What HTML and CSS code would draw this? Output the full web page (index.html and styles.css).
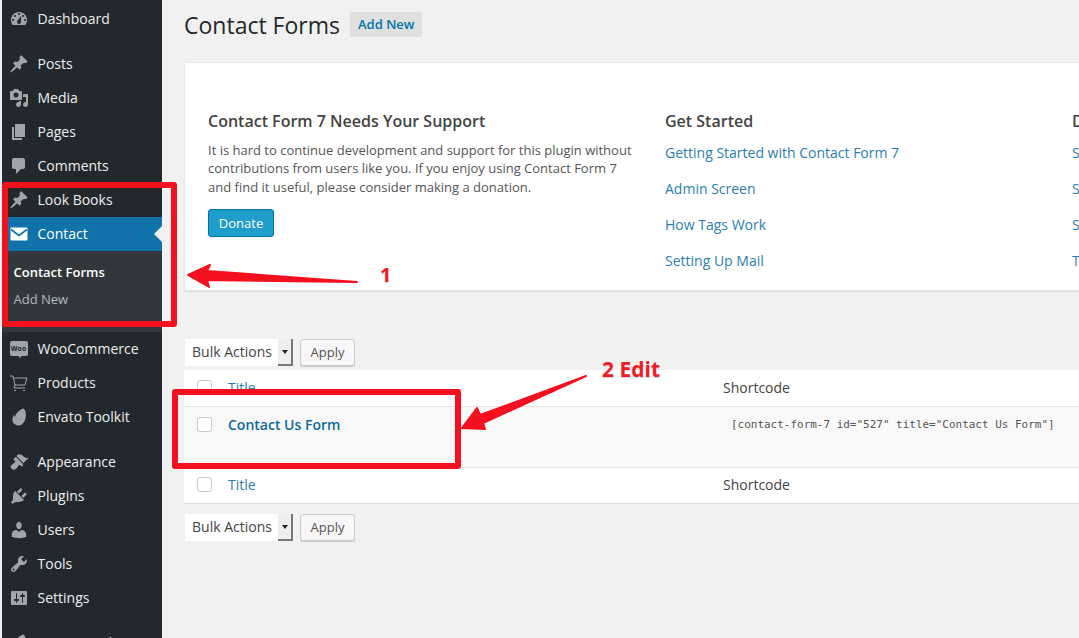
FILE: index.html
```html
<!DOCTYPE html>
<html lang="en">

<head>
    <meta charset="UTF-8">
    <title>Contact Forms</title>
    <link rel="stylesheet" href="styles.css">
</head>

<body>
    <svg class="defs" width="0" height="0">
        <symbol id="i-dashboard" viewBox="0 0 20 20"><path d="M3.76 16h12.48c1.1-1.37 1.76-3.11 1.76-5 0-4.42-3.58-8-8-8s-8 3.58-8 8c0 1.89.66 3.63 1.76 5zM10 4c.55 0 1 .45 1 1s-.45 1-1 1-1-.45-1-1 .45-1 1-1zM6 6c.55 0 1 .45 1 1s-.45 1-1 1-1-.45-1-1 .45-1 1-1zm8 0c.55 0 1 .45 1 1s-.45 1-1 1-1-.45-1-1 .45-1 1-1zm-5.37 5.55L12 7v6c0 1.1-.9 2-2 2s-2-.9-2-2c0-.57.24-1.08.63-1.45zM4 10c.55 0 1 .45 1 1s-.45 1-1 1-1-.45-1-1 .45-1 1-1zm12 0c.55 0 1 .45 1 1s-.45 1-1 1-1-.45-1-1 .45-1 1-1z" fill-rule="evenodd"/></symbol>
        <symbol id="i-pin" viewBox="0 0 20 20"><path d="M10.44 3.02l1.82-1.82 6.36 6.35-1.83 1.82c-1.05-.68-2.48-.57-3.41.36l-.75.75c-.92.93-1.04 2.35-.35 3.41l-1.83 1.82-2.41-2.41-2.8 2.79c-.42.42-3.38 2.71-3.8 2.29s1.86-3.39 2.28-3.81l2.79-2.79L4.1 9.36l1.83-1.82c1.05.69 2.48.57 3.4-.36l.75-.75c.93-.92 1.05-2.35.36-3.41z"/></symbol>
        <symbol id="i-media" viewBox="0 0 20 20"><path d="M13 11V4c0-.55-.45-1-1-1h-1.67L9 1H5L3.67 3H2c-.55 0-1 .45-1 1v7c0 .55.45 1 1 1h10c.55 0 1-.45 1-1zM7 4.5c1.38 0 2.5 1.12 2.5 2.5S8.38 9.5 7 9.5 4.5 8.38 4.5 7 5.62 4.5 7 4.5zM14 6h5v10.5c0 1.38-1.12 2.5-2.5 2.5S14 17.88 14 16.5s1.12-2.5 2.5-2.5c.17 0 .34.02.5.05V9h-3V6zm-4 8.05V13h2v3.5c0 1.38-1.12 2.5-2.5 2.5S7 17.88 7 16.5 8.12 14 9.5 14c.17 0 .34.02.5.05z"/></symbol>
        <symbol id="i-pages" viewBox="0 0 20 20"><path d="M6 15V2h10v13H6zm-1 1h8v2H3V5h2v11z"/></symbol>
        <symbol id="i-comments" viewBox="0 0 20 20"><path d="M5 2h9c1.1 0 2 .9 2 2v7c0 1.1-.9 2-2 2h-2l-5 5v-5H5c-1.1 0-2-.9-2-2V4c0-1.1.9-2 2-2z"/></symbol>
        <symbol id="i-mail" viewBox="0 0 20 20"><path d="M2.5 3.5h15c.6 0 1 .4 1 1v11c0 .6-.4 1-1 1h-15c-.6 0-1-.4-1-1v-11c0-.6.4-1 1-1z"/><path d="M2 5.500l8 6 8-6" fill="none" stroke="#0f72a8" stroke-width="1.6"/></symbol>
        <symbol id="i-cart" viewBox="0 0 20 20"><path d="M1 3h3l2 9h10l2-7H5M6 12l-1 3h11" fill="none" stroke="currentColor" stroke-width="1"/><path d="M5 17h2v1H5zM14 17h2v1h-2z"/></symbol>
        <symbol id="i-leaf" viewBox="0 0 20 20"><path d="M14.6 1.4c2 1.6 2.9 6.4 1.7 10.600-1.100 3.900-3.700 6.400-7.200 6.400-3.600 0-5.700-2.800-5.700-5.800 0-2 .8-3.600 1.700-4.900.2 1 .4 2 .9 2.700.5-3.800 3.700-7.700 8.600-9z"/></symbol>
        <symbol id="i-brush" viewBox="0 0 20 20"><path d="M14.48 11.06L7.41 3.99l1.5-1.5c.5-.56 2.3-.47 3.51.32 1.21.8 1.43 1.28 2.91 2.1 1.18.64 2.45 1.26 4.45.85zm-.71.71L6.7 4.7 4.93 6.47c-.39.39-.39 1.02 0 1.41l1.06 1.06c.39.39.39 1.03 0 1.42-.6.6-1.43 1.11-2.21 1.69-.35.26-.7.53-1.01.84C1.43 13.23.91 14.95 2.6 16.64c1.69 1.68 3.41 1.16 4.75-.18.31-.31.58-.66.85-1.02.57-.78 1.08-1.61 1.69-2.21.39-.39 1.02-.39 1.41 0l1.06 1.06c.39.39 1.02.39 1.41 0z"/></symbol>
        <symbol id="i-plugin" viewBox="0 0 20 20"><path d="M13.11 4.36L9.87 7.6 8 5.73l3.24-3.24c.35-.34 1.05-.2 1.56.32.52.51.66 1.21.31 1.55zm-8 1.77l.91-1.12 9.01 9.01-1.19.84c-.71.71-2.63 1.16-3.82 1.16H6.14L4.9 17.26c-.59.59-1.54.59-2.12 0-.59-.58-.59-1.53 0-2.12l1.24-1.24v-3.88c0-1.13.4-3.19 1.09-3.89zm7.26 3.97l3.24-3.24c.34-.35 1.04-.21 1.55.31.52.51.66 1.21.31 1.55l-3.24 3.25z"/></symbol>
        <symbol id="i-users" viewBox="0 0 20 20"><path d="M10 9.25c-2.27 0-2.73-3.44-2.73-3.44C7 4.02 7.82 2 9.97 2c2.16 0 2.98 2.02 2.71 3.81 0 0-.41 3.44-2.68 3.44zm0 2.57L12.72 10c2.39 0 4.52 2.33 4.52 4.53v2.49s-3.65 1.13-7.24 1.13c-3.65 0-7.24-1.13-7.24-1.13v-2.49c0-2.25 1.94-4.48 4.47-4.48z"/></symbol>
        <symbol id="i-tools" viewBox="0 0 20 20"><path d="M16.68 9.77c-1.34 1.34-3.3 1.67-4.95.99l-5.41 6.52c-.99.99-2.59.99-3.58 0s-.99-2.59 0-3.57l6.52-5.42c-.68-1.65-.35-3.61.99-4.95 1.28-1.28 3.12-1.62 4.72-1.06l-2.89 2.89 2.82 2.82 2.86-2.87c.53 1.58.18 3.39-1.08 4.65zM3.81 16.21c.4.39 1.04.39 1.43 0 .4-.4.4-1.04 0-1.43-.39-.4-1.03-.4-1.43 0-.39.39-.39 1.03 0 1.43z"/></symbol>
        <symbol id="i-settings" viewBox="0 0 20 20"><path d="M18 16V4c0-.55-.45-1-1-1H3c-.55 0-1 .45-1 1v12c0 .55.45 1 1 1h14c.55 0 1-.45 1-1zM8 11h1c.55 0 1 .45 1 1s-.45 1-1 1H8v1.5c0 .28-.22.5-.5.5s-.5-.22-.5-.5V13H6c-.55 0-1-.45-1-1s.45-1 1-1h1V5.5c0-.28.22-.5.5-.5s.5.22.5.5V11zm5-2h-1c-.55 0-1-.45-1-1s.45-1 1-1h1V5.5c0-.28.22-.5.5-.5s.5.22.5.5V7h1c.55 0 1 .45 1 1s-.45 1-1 1h-1v5.5c0 .28-.22.5-.5.5s-.5-.22-.5-.5V9z"/></symbol>
    </svg>

    <div id="khung">
        <nav class="menu">
            <ul>
                <li><a href=""><svg class="icon"><use href="#i-dashboard"/></svg>Dashboard</a></li>
                <li class="sep"></li>
                <li><a href=""><svg class="icon"><use href="#i-pin"/></svg>Posts</a></li>
                <li><a href=""><svg class="icon"><use href="#i-media"/></svg>Media</a></li>
                <li><a href=""><svg class="icon"><use href="#i-pages"/></svg>Pages</a></li>
                <li><a href=""><svg class="icon"><use href="#i-comments"/></svg>Comments</a></li>
                <li><a href=""><svg class="icon"><use href="#i-pin"/></svg>Look Books</a></li>
                <li class="current">
                    <a href=""><svg class="icon"><use href="#i-mail"/></svg>Contact</a>
                    <ul class="submenu">
                        <li><a href="" class="active">Contact Forms</a></li>
                        <li><a href="">Add New</a></li>
                    </ul>
                </li>
                <li>
                    <a href="">
                        <span class="woo">Woo</span>WooCommerce
                    </a>
                </li>
                <li><a href=""><svg class="icon"><use href="#i-cart"/></svg>Products</a></li>
                <li><a href=""><svg class="icon"><use href="#i-leaf"/></svg>Envato Toolkit</a></li>
                <li class="sep"></li>
                <li><a href=""><svg class="icon"><use href="#i-brush"/></svg>Appearance</a></li>
                <li><a href=""><svg class="icon"><use href="#i-plugin"/></svg>Plugins</a></li>
                <li><a href=""><svg class="icon"><use href="#i-users"/></svg>Users</a></li>
                <li><a href=""><svg class="icon"><use href="#i-tools"/></svg>Tools</a></li>
                <li><a href=""><svg class="icon"><use href="#i-settings"/></svg>Settings</a></li>
                <li class="sep"></li>
                <li><a href=""><svg class="icon"><use href="#i-leaf"/></svg>Loco Translate</a></li>
            </ul>
        </nav>

        <main class="noi-dung">
            <div class="tieu-de">
                <h1>Contact Forms</h1>
                <a href="" class="add-new">Add New</a>
            </div>

            <section class="welcome">
                <div class="cot cot-1">
                    <h3>Contact Form 7 Needs Your Support</h3>
                    <p>It is hard to continue development and support for this plugin without contributions from users like you. If you enjoy using Contact Form 7 and find it useful, please consider making a donation.</p>
                    <a href="" class="donate">Donate</a>
                </div>
                <div class="cot cot-2">
                    <h3>Get Started</h3>
                    <a href="">Getting Started with Contact Form 7</a>
                    <a href="">Admin Screen</a>
                    <a href="">How Tags Work</a>
                    <a href="">Setting Up Mail</a>
                </div>
                <div class="cot cot-3">
                    <h3>Did You Know?</h3>
                    <a href="">Spam Filtering</a>
                    <a href="">Save Messages</a>
                    <a href="">Special Tags</a>
                    <a href="">Translations</a>
                </div>
            </section>

            <div class="bulk bulk-tren">
                <div class="chon">Bulk Actions<span class="mui-ten"></span></div>
                <button class="apply">Apply</button>
            </div>

            <table class="ds-form">
                <tr class="head">
                    <td class="c-check"><span class="check"></span></td>
                    <td class="c-title"><a href="">Title</a></td>
                    <td>Shortcode</td>
                </tr>
                <tr class="form-row">
                    <td class="c-check"><span class="check"></span></td>
                    <td class="c-title"><a href="" class="ten-form">Contact Us Form</a></td>
                    <td><code>[contact-form-7 id="527" title="Contact Us Form"]</code></td>
                </tr>
                <tr class="foot">
                    <td class="c-check"><span class="check"></span></td>
                    <td class="c-title"><a href="">Title</a></td>
                    <td>Shortcode</td>
                </tr>
            </table>

            <div class="bulk">
                <div class="chon">Bulk Actions<span class="mui-ten"></span></div>
                <button class="apply">Apply</button>
            </div>
        </main>
    </div>

    <!-- annotations drawn on top of the screenshot -->
    <div class="box box-1"></div>
    <div class="box box-2"></div>
    <svg class="arrows" width="1079" height="638">
        <path d="M188 275L210 265 207 271 357 282 207 280 209 287z"/>
        <path d="M462 428L477 408 480 415 586 376 483 423 485 429z"/>
    </svg>
    <span class="note note-1">1</span>
    <span class="note note-2">2 Edit</span>
</body>

</html>
```

FILE: styles.css
```css
* {
    box-sizing: border-box;
    padding: 0;
    margin: 0;
}

html,
body {
    width: 1079px;
    height: 638px;
    overflow: hidden;
}

body {
    position: relative;
    background-color: #f1f1f1;
    color: #444;
    font-family: "Open Sans", sans-serif;
    font-size: 13px;
}

a {
    text-decoration: none;
    color: #0073aa;
}

.defs {
    position: absolute;
}

#khung {
    display: flex;
    height: 638px;
    padding-left: 1.5px;
}

/* sidebar */
.menu {
    flex: none;
    width: 160px;
    height: 638px;
    overflow: hidden;
    padding-top: 2px;
    background-color: #23282d;
}

.menu ul {
    list-style: none;
}

.menu > ul > li > a {
    display: flex;
    align-items: center;
    height: 34px;
    padding-left: 7px;
    padding-bottom: 1px;
    color: #eee;
    font-size: 14px;
}

.menu .sep {
    height: 11px;
}

.icon {
    flex: none;
    width: 20px;
    height: 20px;
    margin-right: 9px;
    fill: #a0a5aa;
    color: #a0a5aa;
}

.woo {
    position: relative;
    flex: none;
    width: 18px;
    height: 15px;
    margin-right: 10px;
    margin-left: 1px;
    border-radius: 2px;
    background-color: #a0a5aa;
    color: #23282d;
    font-size: 7px;
    font-weight: 700;
    line-height: 15px;
    text-align: center;
}

.woo::after {
    content: "";
    position: absolute;
    left: 9px;
    top: 15px;
    border-top: 2px solid #a0a5aa;
    border-right: 3px solid transparent;
}

.menu .current > a {
    position: relative;
    background-color: #0f72a8;
    color: #fff;
}

.menu .current > a .icon {
    fill: #fff;
}

.menu .current > a::after {
    content: "";
    position: absolute;
    right: 0;
    top: 9px;
    border: 8px solid transparent;
    border-right-color: #f1f1f1;
    border-left-width: 0;
}

.submenu {
    height: 81px;
    padding-top: 10px;
    background-color: #32373c;
}

.submenu a {
    display: block;
    height: 27px;
    padding-left: 12px;
    color: #b4b9be;
    font-size: 13px;
    line-height: 22px;
}

.submenu a.active {
    color: #fff;
    font-weight: 600;
}

/* content */
.noi-dung {
    flex: none;
    width: 1100px;
    padding-left: 22.5px;
}

.tieu-de {
    display: flex;
    align-items: center;
    height: 49px;
}

.tieu-de h1 {
    font-size: 23px;
    font-weight: 400;
    color: #23282d;
}

.add-new {
    margin-left: 10px;
    padding: 0 8px;
    height: 25px;
    background-color: #e0e0e0;
    font-size: 13px;
    font-weight: 600;
    line-height: 25px;
}

.welcome {
    display: flex;
    height: 229px;
    margin-top: 13px;
    padding: 47px 0 0 23px;
    background-color: #fff;
    box-shadow: 0 1px 1px rgba(0, 0, 0, .08);
    border: 1px solid #e8e8e8;
}

.cot {
    flex: none;
}

.cot-1 {
    width: 457px;
}

.cot-1 p {
    width: 428px;
    margin-top: 9px;
    line-height: 18.4px;
    color: #555;
}

.cot-2 {
    width: 407px;
}

.cot h3 {
    color: #444;
    font-size: 16px;
    font-weight: 600;
    line-height: 22px;
}

.cot-2 a,
.cot-3 a {
    display: block;
    margin-top: 10px;
    font-size: 14px;
    line-height: 26px;
    color: #2b7fae;
}

.cot-2 h3 + a,
.cot-3 h3 + a {
    margin-top: 8px;
}

.donate {
    display: block;
    width: 66px;
    height: 28px;
    margin-top: 13px;
    border: 1px solid #0073aa;
    border-radius: 3px;
    background-color: #1f9dcb;
    color: #fff;
    line-height: 26px;
    text-align: center;
}

.bulk {
    display: flex;
    align-items: center;
    height: 28px;
    gap: 7px;
    padding-left: 1px;
    margin-top: 10px;
}

.bulk-tren {
    margin-top: 47px;
    margin-bottom: 4px;
}

.chon {
    position: relative;
    width: 108px;
    height: 27px;
    padding-left: 7px;
    background-color: #fff;
    color: #444;
    font-size: 14px;
    line-height: 26px;
}

.mui-ten {
    position: absolute;
    right: 0;
    top: 0;
    width: 15px;
    height: 27px;
    border-right: 2px solid #777;
    border-bottom: 2px solid #777;
    background-color: #eee;
}

.mui-ten::after {
    content: "";
    position: absolute;
    left: 4px;
    top: 11px;
    border: 3px solid transparent;
    border-top: 4px solid #222;
    border-bottom-width: 0;
}

.apply {
    width: 55px;
    height: 27px;
    border: 1px solid #ccc;
    border-radius: 3px;
    background-color: #f7f7f7;
    box-shadow: 0 1px 0 #ccc;
    color: #555;
    font-family: inherit;
    font-size: 13px;
}

.ds-form {
    width: 100%;
    border-collapse: collapse;
    background-color: #fff;
    box-shadow: 0 1px 1px rgba(0, 0, 0, .08);
    font-size: 14px;
}

.ds-form td {
    height: 36px;
    padding: 0;
    vertical-align: middle;
}

.ds-form .foot td {
    padding-bottom: 2px;
}

.ds-form .form-row td {
    height: 61px;
    padding-top: 8px;
    vertical-align: top;
    background-color: #f9f9f9;
    border-top: 1px solid #e5e5e5;
    border-bottom: 1px solid #e5e5e5;
}

.c-check {
    width: 44px;
    padding-left: 13px !important;
}

.c-title {
    width: 495px;
}

.c-title a {
    color: #2b7fae;
}

.ds-form .ten-form {
    color: #0f6a9a;
    font-weight: 600;
}

.check {
    display: block;
    width: 15px;
    height: 15px;
    border: 1px solid #ccc;
    border-radius: 3px;
    background-color: #fff;
}

.form-row .check {
    margin-top: 2px;
}

code {
    display: block;
    padding-left: 8px;
    margin-top: 3px;
    color: #555;
    font-family: "DejaVu Sans Mono", monospace;
    font-size: 10.97px;
}

/* annotations */
.box {
    position: absolute;
    border: 6px solid #f5101f;
    border-radius: 3px;
}

.box-1 {
    left: 2px;
    top: 182px;
    width: 175px;
    height: 145px;
}

.box-2 {
    left: 172px;
    top: 389px;
    width: 289px;
    height: 80px;
}

.arrows {
    position: absolute;
    left: 0;
    top: 0;
    fill: #f5101f;
    stroke: #f5101f;
    stroke-width: 2;
    stroke-linejoin: round;
}

.note {
    position: absolute;
    color: #ee1c25;
    font-size: 20px;
    font-weight: 700;
    line-height: 24px;
    text-shadow: 0 0 2px #fff, 0 1px 1px rgba(0, 0, 0, .25);
}

.note-1 {
    left: 380px;
    top: 263px;
}

.note-2 {
    left: 602px;
    top: 357px;
    font-size: 21px;
}
```
